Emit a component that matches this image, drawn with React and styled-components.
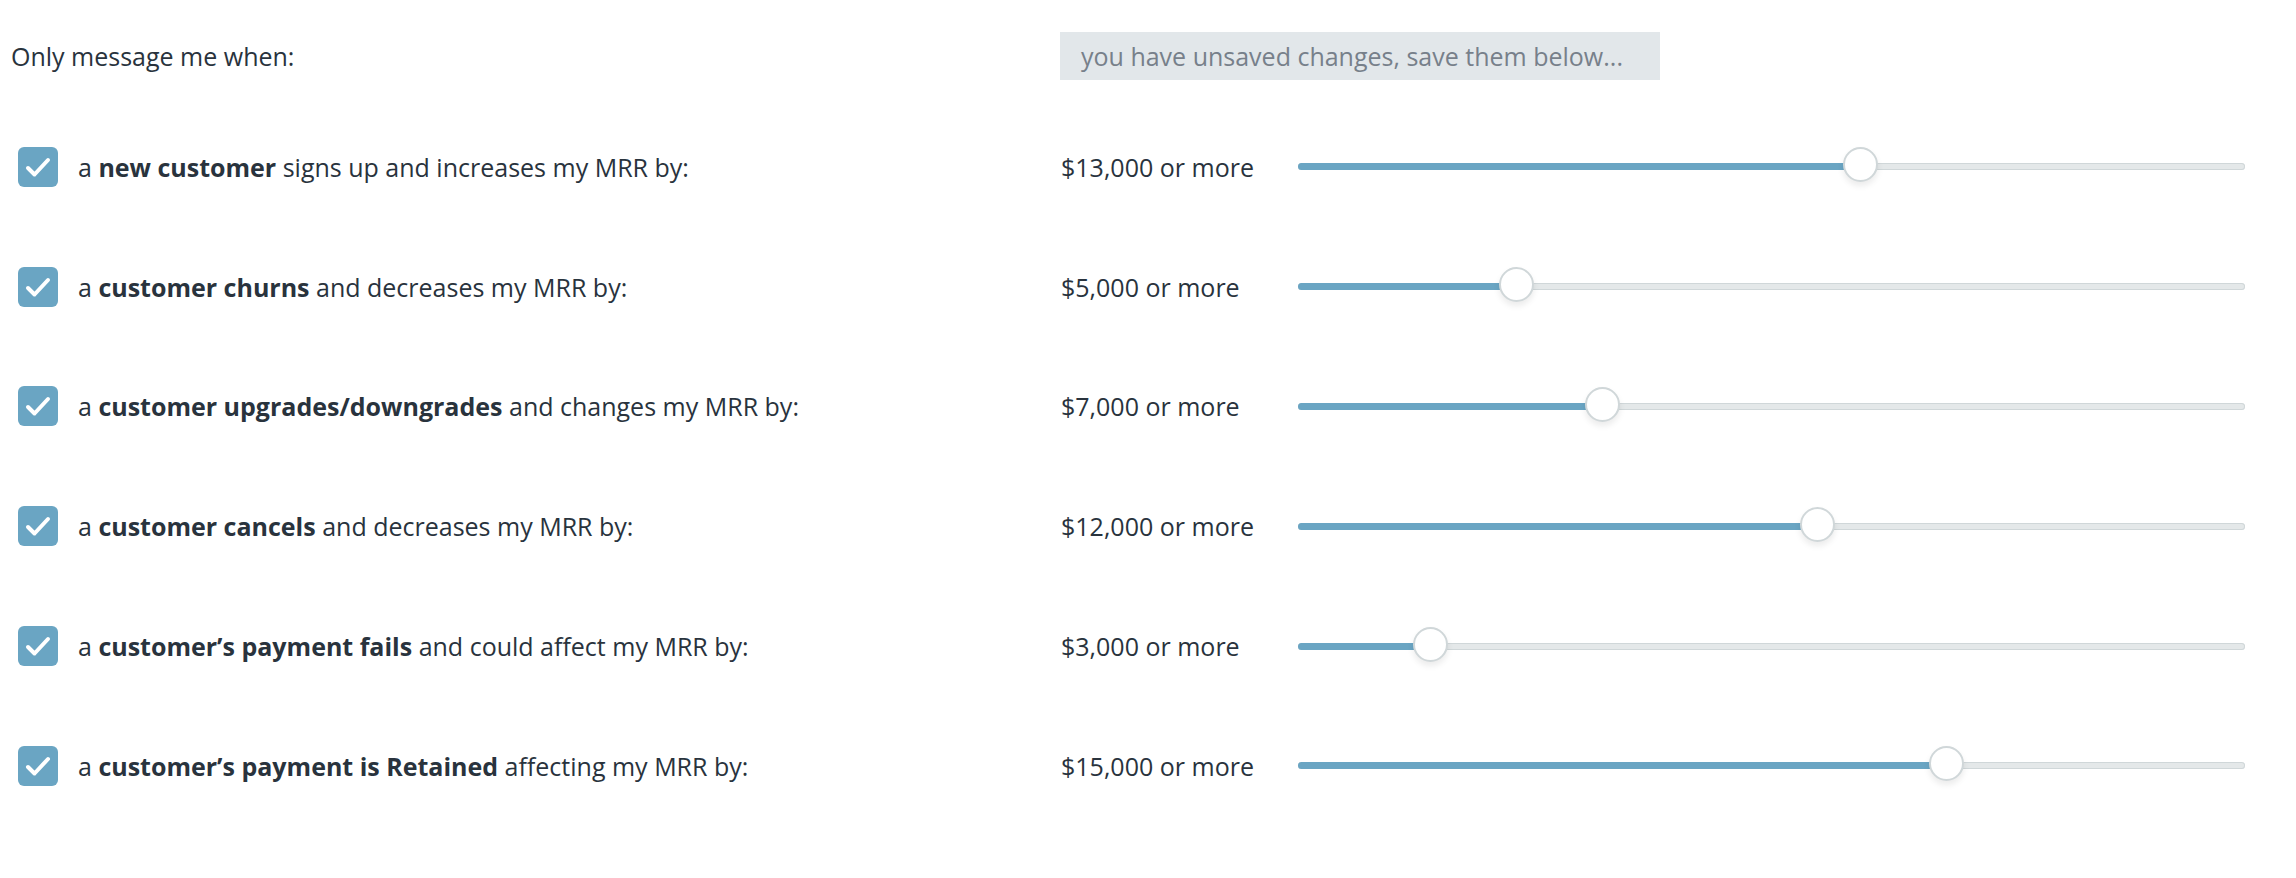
import React from 'react';
import styled, { createGlobalStyle } from 'styled-components';

const GlobalStyle = createGlobalStyle`
  html, body {
    margin: 0;
    padding: 0;
    background: #ffffff;
  }
  body {
    font-family: "Open Sans", "Noto Sans", sans-serif;
    color: #29333d;
  }
`;

const Colors = {
  text: '#29333d',
  muted: '#77808a',
  blue: '#6aa5c3',
  badge: '#e2e7ea',
  track: '#e4e8e9',
  trackBorder: '#d0d7d9',
};

// px per dollar along the track, and where $0 sits
const PX_PER_DOLLAR = 0.043;
const ZERO_OFFSET = 3;

const rules = [
  { bold: 'new customer', rest: ' signs up and increases my MRR by:', value: 13000 },
  { bold: 'customer churns', rest: ' and decreases my MRR by:', value: 5000 },
  { bold: 'customer upgrades/downgrades', rest: ' and changes my MRR by:', value: 7000 },
  { bold: 'customer cancels', rest: ' and decreases my MRR by:', value: 12000 },
  { bold: 'customer’s payment fails', rest: ' and could affect my MRR by:', value: 3000 },
  { bold: 'customer’s payment is Retained', rest: ' affecting my MRR by:', value: 15000 },
];

const Container = styled.div`
  padding: 32px 51px 40px 10px;
  font-size: 25px;
`;

const Row = styled.div`
  display: grid;
  grid-template-columns: 1050px 238px 947px;
  align-items: center;
  height: ${props => props.header ? '48px' : '119.8px'};
`;

const Header = styled(Row)`
  margin-bottom: 27px;
`;

const Intro = styled.span`
  padding-left: 1px;
`;

const Notice = styled.div`
  grid-column: 2 / span 2;
  justify-self: start;
  width: 600px;
  box-sizing: border-box;
  height: 48px;
  display: flex;
  align-items: center;
  padding-left: 21px;
  background-color: ${Colors.badge};
  color: ${Colors.muted};
`;

const Label = styled.label`
  display: flex;
  align-items: center;
  column-gap: 20px;
  padding-left: 8px;
`;

const CheckBox = styled.span`
  width: 40px;
  height: 40px;
  border-radius: 6px;
  background-color: ${Colors.blue};
  display: flex;
  align-items: center;
  justify-content: center;
  flex: none;
`;

const Amount = styled.span`
  padding-left: 1px;
`;

const Track = styled.div`
  position: relative;
  height: 7px;
  border-radius: 4px;
  background-color: ${Colors.track};
  box-shadow: inset 0 0 0 1px ${Colors.trackBorder};
`;

const Fill = styled.div`
  position: absolute;
  left: 0;
  top: 0;
  bottom: 0;
  border-radius: 4px;
  background-color: ${Colors.blue};
`;

const Thumb = styled.div`
  position: absolute;
  top: 50%;
  width: 35px;
  height: 35px;
  margin-left: -17.5px;
  margin-top: -19.5px;
  border-radius: 50%;
  box-sizing: border-box;
  background: #ffffff;
  border: 2px solid ${Colors.trackBorder};
  box-shadow: 0 4px 6px rgba(0, 0, 0, 0.08);
`;

const Check = () => (
  <svg width="40" height="40" viewBox="0 0 40 40">
    <path d="M10 21 L16.5 27.5 L30 13" fill="none" stroke="#fff" strokeWidth="4" strokeLinecap="round" strokeLinejoin="round" />
  </svg>
);

const Slider = ({ value }) => {
  const center = ZERO_OFFSET + value * PX_PER_DOLLAR;
  return (
    <Track>
      <Fill style={{ width: `${center}px` }} />
      <Thumb style={{ left: `${center}px` }} />
    </Track>
  );
};

const App = () => {
  return (
    <Container>
      <GlobalStyle />
      <Header header>
        <Intro>Only message me when:</Intro>
        <Notice>you have unsaved changes, save them below...</Notice>
      </Header>
      {rules.map(rule => (
        <Row key={rule.bold}>
          <Label>
            <CheckBox><Check /></CheckBox>
            <span>a <b>{rule.bold}</b>{rule.rest}</span>
          </Label>
          <Amount>${rule.value.toLocaleString('en-US')} or more</Amount>
          <Slider value={rule.value} />
        </Row>
      ))}
    </Container>
  );
};

export default App;
